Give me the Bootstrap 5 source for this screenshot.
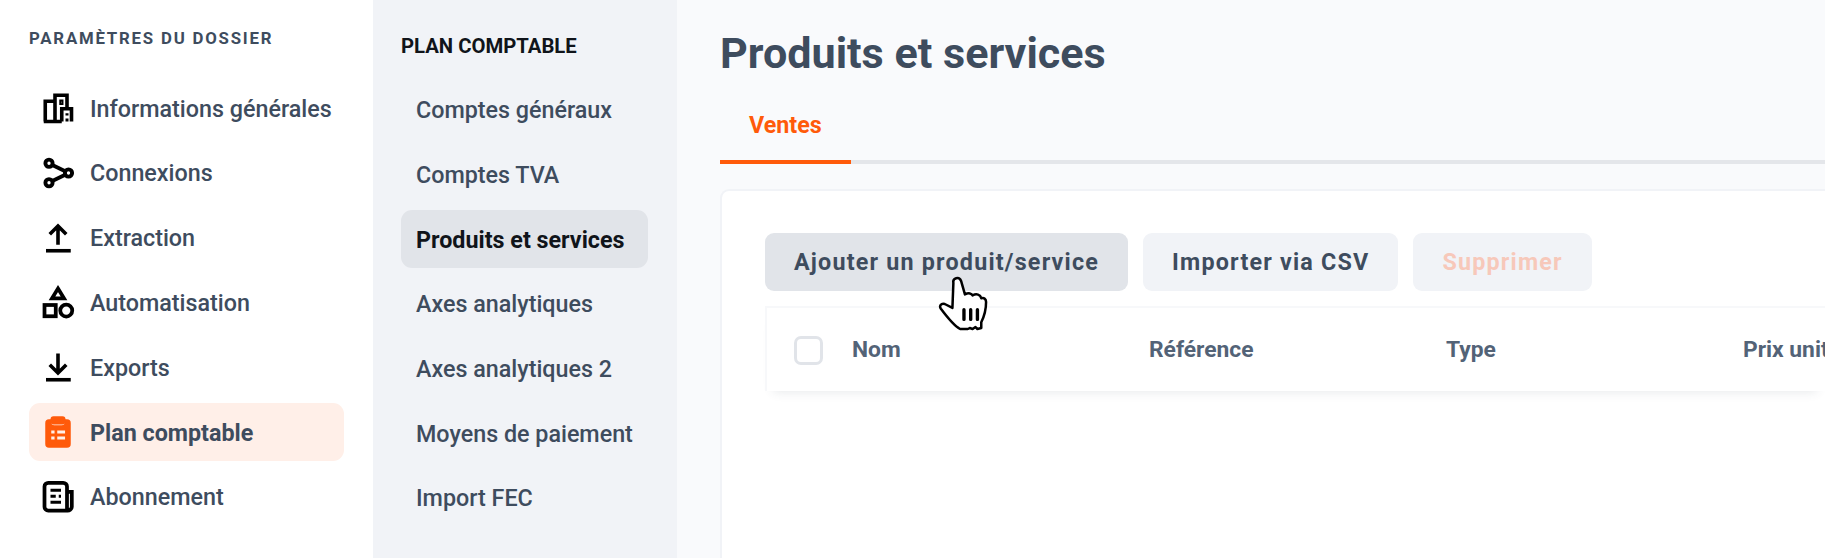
<!DOCTYPE html>
<html lang="fr">
<head>
<meta charset="utf-8">
<title>Produits et services</title>
<link href="https://cdn.jsdelivr.net/npm/bootstrap@5.3.0/dist/css/bootstrap.min.css" rel="stylesheet">
<style>
html,body{height:558px;overflow:hidden;}
body{font-family:"Roboto","Liberation Sans",sans-serif;background:#fff;color:#3e4c5e;}
.shell{height:558px;width:1825px;position:relative;overflow:hidden;}
.side-a{width:373px;flex:none;padding:28px 29px 0;background:#fff;}
.side-b{width:304px;flex:none;padding:28px 29px 0 28px;background:#f1f3f7;}
.side-main{flex:1 1 auto;min-width:0;background:#f9fafc;padding:27px 0 0 43px;}
.side-title{font-size:16.8px;line-height:20px;font-weight:700;letter-spacing:1.8px;color:#3e4c5e;margin:0 0 31px;text-transform:uppercase;}
.side-b-title{font-size:20.3px;line-height:22px;font-weight:700;color:#10141a;margin:7px 0 24px;text-transform:uppercase;}
.menu-list{display:flex;flex-direction:column;gap:6.8px;}
.menu-b-list{gap:7.1px;}
.menu-a{height:58px;padding:2px 0 0 11px;gap:14px;font-size:23.3px;font-weight:500;color:#3e4c5e;text-decoration:none;border-radius:11px;display:flex;align-items:center;}
.menu-a svg{width:36px;height:36px;flex:none;margin-top:-2px;}
.menu-a.on{background:#ffefe8;font-weight:700;}
.menu-b{height:57.6px;padding:2px 0 0 15px;font-size:23.3px;font-weight:500;color:#3e4c5e;text-decoration:none;border-radius:11px;display:flex;align-items:center;white-space:nowrap;}
.menu-b.on{background:#e1e4e9;color:#10141a;font-weight:700;}
.page-title{font-size:43.1px;line-height:54px;font-weight:700;color:#3e4c5e;margin:0;}
.tabs-row{margin-top:16px;border-bottom:4px solid #e4e6ea;height:67px;display:flex;}
.tab-on{width:131px;height:67px;border-bottom:4px solid #ff5a0a;color:#ff5a0a;font-size:23.3px;font-weight:700;padding-left:29px;line-height:57px;text-decoration:none;display:block;}
.sheet{margin-top:25px;background:#fff;border:2px solid #f1f3f7;border-right:0;border-radius:9px 0 0 0;height:400px;padding:42px 0 0 43px;}
.action{height:58px;border:0;border-radius:9px;font-size:23.3px;font-weight:700;letter-spacing:1.2px;padding:0 29px;color:#3e4c5e;background:#f1f3f7;white-space:nowrap;}
.action.hot{background:#e1e4e9;}
.action.off{color:#f7c8ba;opacity:1;}
.actions{gap:15px;}
.grid-head{margin-top:15px;border:2px solid #f7f8fa;border-right:0;border-bottom:0;height:85px;display:flex;align-items:center;padding:2px 0 0 27px;box-shadow:0 9px 10px -8px rgba(60,70,90,.12);font-size:22.8px;font-weight:700;color:#536377;overflow:hidden;}
.tick{width:29px;height:29px;border:3px solid #e1e4e9;border-radius:7px;flex:none;margin-right:29px;background:#fff;}
.cell{width:297px;flex:none;white-space:nowrap;}
.pointer{position:absolute;left:938px;top:275px;width:50px;height:58px;}
</style>
</head>
<body>
<div class="shell d-flex">
  <nav class="side-a">
    <p class="side-title">Paramètres du dossier</p>
    <div class="menu-list">
      <a class="menu-a" href="#"><svg viewBox="0 0 24 24" fill="none" stroke="#000" stroke-width="2.400"><path d="M3.500 21V7.500h6.500V21M2.500 21h12M10 7.500V3.500h8V12.500M14.500 21V12.500h6.500V21"/><path d="M13.500 7h1.500v2.400h-1.500z" stroke-width="1.300"/><path d="M18 15.500v1.500M18 19v2" stroke-width="2"/></svg>Informations générales</a>
      <a class="menu-a" href="#"><svg viewBox="0 0 24 24" fill="none" stroke="#000" stroke-width="2.600"><circle cx="6" cy="5.500" r="2.400"/><circle cx="6" cy="18.500" r="2.400"/><circle cx="19" cy="12" r="2.400"/><path d="M8.200 6.700 16.800 10.800M8.200 17.300 16.800 13.200"/></svg>Connexions</a>
      <a class="menu-a" href="#"><svg viewBox="0 0 24 24" fill="none" stroke="#000" stroke-width="2.400"><path d="M4 20.500h16.500"/><path d="M12 16.500V4M6.500 9.500 12 4l5.500 5.500"/></svg>Extraction</a>
      <a class="menu-a" href="#"><svg viewBox="0 0 24 24" fill="none" stroke="#000" stroke-width="2.500"><path d="M12 3 16 9.500H8z"/><rect x="3" y="14" width="7.500" height="7.500"/><circle cx="17.500" cy="17.700" r="4"/></svg>Automatisation</a>
      <a class="menu-a" href="#"><svg viewBox="0 0 24 24" fill="none" stroke="#000" stroke-width="2.400"><path d="M4 20.500h16.500"/><path d="M12 3v13M6.500 10.500 12 16l5.500-5.500"/></svg>Exports</a>
      <a class="menu-a on" href="#"><svg viewBox="0 0 24 24"><path fill="#ff5a0a" d="M6 3.500h1.500V5.500a2 2 0 0 0 2 2h5a2 2 0 0 0 2-2V3.500H18a2.500 2.500 0 0 1 2.500 2.500v14a2.500 2.500 0 0 1-2.500 2.500H6A2.500 2.500 0 0 1 3.500 20V6A2.500 2.500 0 0 1 6 3.500z"/><rect fill="#ff5a0a" x="7" y="1.500" width="10" height="5.500" rx="2"/><path fill="#ffefe8" d="M7.500 11h2.200v2H7.500zM11.500 11h5.200v2h-5.200zM7.500 15h2.200v2H7.500zM11.500 15h5.200v2h-5.200z"/></svg>Plan comptable</a>
      <a class="menu-a" href="#"><svg viewBox="0 0 24 24" fill="none" stroke="#000" stroke-width="2.500"><path d="M18 21H5.500A2.500 2.500 0 0 1 3 18.500V5a2.500 2.500 0 0 1 2.500-2.500H15.500A2.500 2.500 0 0 1 18 5v16a2.800 2.800 0 0 0 3.200-2.500V8.500H18"/><path d="M7 7.500h7M7 11.500h3.500M12.500 11.500H14M7 15.500h7" stroke-width="2"/></svg>Abonnement</a>
    </div>
  </nav>
  <nav class="side-b">
    <p class="side-b-title">Plan comptable</p>
    <div class="menu-list menu-b-list">
      <a class="menu-b" href="#">Comptes généraux</a>
      <a class="menu-b" href="#">Comptes TVA</a>
      <a class="menu-b on" href="#">Produits et services</a>
      <a class="menu-b" href="#">Axes analytiques</a>
      <a class="menu-b" href="#">Axes analytiques 2</a>
      <a class="menu-b" href="#">Moyens de paiement</a>
      <a class="menu-b" href="#">Import FEC</a>
    </div>
  </nav>
  <main class="side-main">
    <h1 class="page-title">Produits et services</h1>
    <div class="tabs-row"><a class="tab-on" href="#">Ventes</a></div>
    <section class="sheet">
      <div class="d-flex actions">
        <button class="action hot" type="button">Ajouter un produit/service</button>
        <button class="action" type="button">Importer via CSV</button>
        <button class="action off" type="button">Supprimer</button>
      </div>
      <div class="grid-head">
        <span class="tick"></span>
        <span class="cell">Nom</span><span class="cell">Référence</span><span class="cell">Type</span><span class="cell">Prix unit</span>
      </div>
    </section>
  </main>
  <svg class="pointer" viewBox="0 0 52 58" fill="#fff" stroke="#000" stroke-width="2.600" stroke-linejoin="round" stroke-linecap="round"><path d="M16 7c-1-5 6-7 8-2l4 14c4-2 7-1 8 1 4-2 8-1 9 3 3-1 5 1 5 4 0 8-2 15-5 21l0 6-4 1-2-2-3 2-3-1-2 1-8 0C17 52 9 42 3 34c-2-3 0-6 4-5l8 4z"/><path d="M27 35v10M34 35v10M41 35v10" stroke-width="3.500" fill="none"/></svg>
</div>
<script src="https://cdn.jsdelivr.net/npm/bootstrap@5.3.0/dist/js/bootstrap.bundle.min.js"></script>
</body>
</html>
